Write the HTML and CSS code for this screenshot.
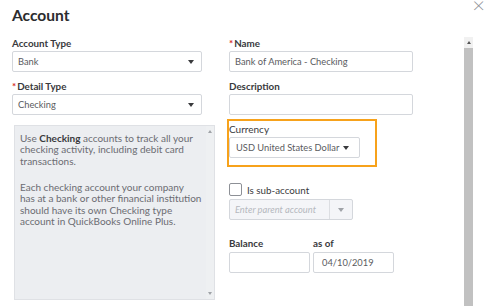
FILE: index.html
```html
<!DOCTYPE html>
<html>
	<head>
		<meta charset="utf-8" />
		<title>Account</title>
		<link rel="stylesheet" href="styles.css">
	</head>
	<body>
		<div class="dialog">
			<h1 class="title">Account</h1>
			<span class="close">&times;</span>
			<div class="body">
				<div class="form">
					<div class="col">
						<label class="label">Account Type</label>
						<div class="select"><span>Bank</span><i class="caret"></i></div>
						<label class="label gap"><b class="req">*</b>Detail Type</label>
						<div class="select"><span>Checking</span><i class="caret"></i></div>
						<div class="helpBox">
							<div class="helpText">
								<p>Use <strong>Checking</strong> accounts to track all your checking activity, including debit card transactions.</p>
								<p>Each checking account your company<br>has at a bank or other financial institution should have its own Checking type account in QuickBooks Online Plus.</p>
							</div>
							<div class="helpScroll"><i class="up"></i><i class="down"></i></div>
						</div>
					</div>
					<div class="col">
						<label class="label"><b class="req">*</b>Name</label>
						<div class="input">Bank of America - Checking</div>
						<label class="label gap">Description</label>
						<div class="input"></div>
						<div class="currency">
							<label class="label">Currency</label>
							<div class="select short"><span>USD United States Dollar</span><i class="caret"></i></div>
						</div>
						<div class="checkRow"><span class="check"></span>Is sub-account</div>
						<div class="parent"><span>Enter parent account</span><i class="caret"></i></div>
						<div class="balanceRow">
							<div class="field">
								<label class="label">Balance</label>
								<div class="input small"></div>
							</div>
							<div class="field">
								<label class="label">as of</label>
								<div class="input small">04/10/2019</div>
							</div>
						</div>
					</div>
				</div>
				<div class="scrollbar"><i class="up"></i><div class="thumb"></div></div>
			</div>
		</div>
	</body>
</html>
```

FILE: styles.css
```css
*,
*::before,
*::after{
	box-sizing: border-box;
}
body{
	margin: 0;
	background: #fff;
	font-family: Lato, "Open Sans", "Liberation Sans", sans-serif;
	color: #393a3d;
}
.dialog{
	width: 493px;
	height: 306px;
	position: relative;
	overflow: hidden;
}
.title{
	margin: 0;
	height: 38px;
	padding: 3px 0 0 12px;
	font-size: 15.6px;
	font-weight: 700;
	line-height: 24px;
	color: #2b2c2e;
}
.close{
	position: absolute;
	top: -9px;
	right: 8px;
	font-size: 22px;
	font-weight: 300;
	color: #8d9096;
}
.body{
	display: flex;
	padding-left: 12px;
}
.form{
	display: grid;
	grid-template-columns: 190px 184px;
	column-gap: 27px;
}
.col{
	display: flex;
	flex-direction: column;
}
.label{
	display: block;
	height: 13px;
	font-size: 9.8px;
	font-weight: 700;
	line-height: 11px;
	color: #393a3d;
}
.label.gap{
	margin-top: 9px;
}
.req{
	color: #d52b1e;
	font-weight: 700;
	margin-right: 1px;
}
.select,
.input,
.parent{
	height: 21px;
	border: 1px solid #d4d7dc;
	border-radius: 2px;
	display: flex;
	align-items: center;
	padding: 0 7px 0 5px;
	font-size: 9.3px;
	color: #5a5b60;
	white-space: nowrap;
}
.select span,
.parent span{
	flex: 1;
}
.caret{
	width: 0;
	height: 0;
	border-left: 3.5px solid transparent;
	border-right: 3.5px solid transparent;
	border-top: 4px solid #393a3d;
}
.helpBox{
	margin: 10px 0 0 2px;
	width: 201px;
	height: 175px;
	background: #eceef1;
	border: 1px solid #dfe1e5;
	display: flex;
}
.helpText{
	flex: 1;
	padding: 7px 0 0 5px;
	font-size: 10px;
	line-height: 11.4px;
	color: #6b6c72;
}
.helpText p{
	margin: 0 0 14.5px;
}
.helpText strong{
	color: #393a3d;
	font-weight: 700;
}
.helpScroll{
	width: 8px;
	background: #eef0f2;
	display: flex;
	flex-direction: column;
	justify-content: space-between;
	align-items: center;
	padding: 4px 0;
}
.helpScroll .up,
.scrollbar .up{
	width: 0;
	height: 0;
	border-left: 2.5px solid transparent;
	border-right: 2.5px solid transparent;
	border-bottom: 3px solid #a0a3a8;
}
.helpScroll .down{
	width: 0;
	height: 0;
	border-left: 2.5px solid transparent;
	border-right: 2.5px solid transparent;
	border-top: 3px solid #a0a3a8;
}
.currency{
	margin: 4px 0 0 -2px;
	width: 150px;
	height: 48px;
	border: 2px solid #f7a21b;
	padding: 2px 0 0 0;
}
.currency .label{
	height: 14px;
	line-height: 13px;
	font-weight: 400;
	font-size: 10px;
}
.select.short{
	width: 131px;
	padding-left: 6px;
	padding-right: 10px;
}
.checkRow{
	margin-top: 16px;
	height: 13px;
	display: flex;
	align-items: center;
	font-size: 9.8px;
	color: #393a3d;
}
.check{
	width: 13px;
	height: 13px;
	border: 1px solid #8d9096;
	border-radius: 2px;
	margin-right: 5px;
}
.parent{
	margin-top: 3px;
	width: 124px;
	background: #f4f5f8;
	padding-right: 0;
	font-style: italic;
	color: #b5b8be;
}
.parent .caret{
	border-top-color: #a0a3a8;
	margin: 0 8px 0 0;
}
.parent span{
	border-right: 1px solid #dcdee2;
	height: 100%;
	line-height: 19px;
	margin-right: 8px;
}
.balanceRow{
	margin-top: 18px;
	display: flex;
	gap: 3px;
}
.balanceRow .label{
	height: 14px;
}
.input.small{
	width: 81px;
	padding-left: 8px;
}
.scrollbar{
	margin: -1px 0 0 51px;
	width: 9px;
	height: 270px;
	display: flex;
	flex-direction: column;
	background: #f1f1f1;
}
.scrollbar .up{
	align-self: center;
	margin: 4px 0 4px;
	border-bottom-color: #555;
}
.thumb{
	flex: 1;
	background: #c1c1c1;
}
```
